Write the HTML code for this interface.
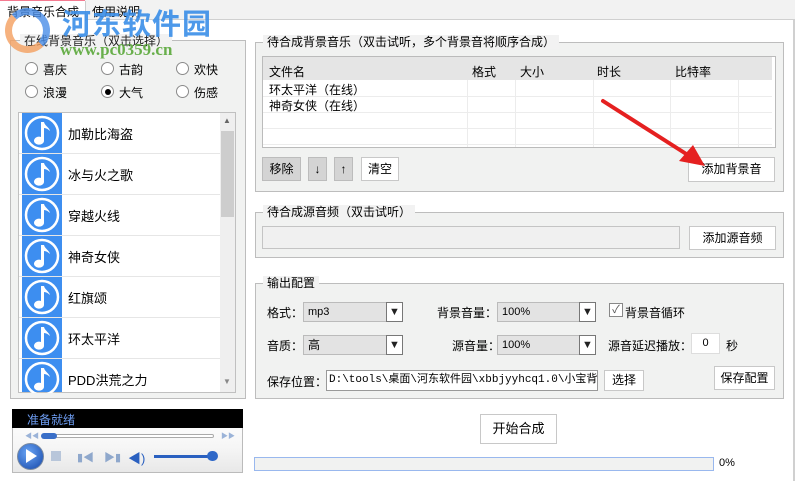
<!DOCTYPE html>
<html><head><meta charset="utf-8"><style>
*{margin:0;padding:0;box-sizing:border-box}
body{width:795px;height:481px;background:#fff;position:relative;overflow:hidden;font-family:"Liberation Sans","Noto Sans CJK SC",sans-serif;font-size:12px;color:#000}
.a{position:absolute}
.grp{position:absolute;border:1px solid #bdbdbd;background:#f1f2f1}
.lg{position:absolute;background:#f2f2f2;padding:0 4px;font-size:12px;line-height:14px}
.btn{position:absolute;background:#fff;border:1px solid #c8c8c8;text-align:center;font-size:12px}
.gbtn{position:absolute;background:#d4d4d4;border:1px solid #bcbcbc;text-align:center;font-size:12px}
.rad{position:absolute;width:13px;height:13px;border-radius:50%;border:1px solid #8a8a8a;background:#fff}
.item{position:absolute;left:19px;width:201px;height:41px;border-bottom:1px solid #e6e6e6;background:#fff}
.ic{position:absolute;left:3px;top:0;width:40px;height:40px;background:#3d8ef0}
.item span{position:absolute;left:49px;top:11px;font-size:13px}
.combo{position:absolute;height:20px;background:#e3e3e3;border:1px solid #bbb;font-size:11px;line-height:18px;padding-left:4px}
.combo b{position:absolute;right:-1px;top:-1px;width:17px;height:20px;background:#fff;border:1px solid #777;font-size:11px;line-height:18px;text-align:center;color:#222;font-weight:normal}
.lab{position:absolute;font-size:12px}
</style></head><body>
<div class="a" style="left:0;top:0;width:795px;height:20px;background:#f2f2f2;border-bottom:1px solid #d0d0d0"></div>
<div class="a" style="left:0;top:0;width:85px;height:2px;background:#f47a90"></div>
<div class="a" style="left:0;top:1px;width:86px;height:20px;background:#fff;border-right:1px solid #ccc"></div>
<div class="lab" style="left:7px;top:3px">背景音乐合成</div>
<div class="lab" style="left:92px;top:3px">使用说明</div>
<div class="a" style="left:793px;top:20px;width:2px;height:461px;background:#d0d0d0"></div>

<div class="grp" style="left:10px;top:40px;width:236px;height:359px"></div>
<div class="lg" style="left:20px;top:34px;color:#222">在线背景音乐（双击选择）</div>
<div class="rad" style="left:25px;top:62px"></div><div class="lab" style="left:43px;top:61px">喜庆</div>
<div class="rad" style="left:101px;top:62px"></div><div class="lab" style="left:119px;top:61px">古韵</div>
<div class="rad" style="left:176px;top:62px"></div><div class="lab" style="left:194px;top:61px">欢快</div>
<div class="rad" style="left:25px;top:85px"></div><div class="lab" style="left:43px;top:84px">浪漫</div>
<div class="rad" style="left:101px;top:85px"></div><div class="a" style="left:105px;top:89px;width:6px;height:6px;border-radius:50%;background:#000"></div><div class="lab" style="left:119px;top:84px">大气</div>
<div class="rad" style="left:176px;top:85px"></div><div class="lab" style="left:194px;top:84px">伤感</div>
<div class="a" style="left:18px;top:112px;width:218px;height:281px;border:1px solid #c0c0c0;background:#fff;overflow:hidden">
<div class="a" style="left:201px;top:0;width:15px;height:281px;background:#efefef"></div>
<div class="a" style="left:202px;top:18px;width:13px;height:86px;background:#cdcdcd"></div>
<div class="a" style="left:204px;top:3px;font-size:8px;color:#666">▲</div>
<div class="a" style="left:204px;top:264px;font-size:8px;color:#888">▼</div>
</div>
<div class="a" style="left:12px;top:409px;width:231px;height:64px;border:1px solid #bbb;background:linear-gradient(#fff,#f6f6f6 60%,#e8e8e8)"></div>
<div class="a" style="left:12px;top:409px;width:231px;height:19px;background:#000"></div>
<div class="lab" style="left:27px;top:411px;color:#6d9cf0">准备就绪</div>
<div class="a" style="left:42px;top:434px;width:172px;height:4px;border:1px solid #aaa;border-radius:2px;background:#fff"></div>
<div class="a" style="left:41px;top:433px;width:16px;height:6px;border-radius:3px;background:#3a6fc8"></div>
<div class="a" style="left:25px;top:431px;font-size:7px;color:#9bb3d8">◀◀</div>
<div class="a" style="left:221px;top:431px;font-size:7px;color:#9bb3d8">▶▶</div>
<div class="a" style="left:17px;top:443px;width:27px;height:27px;border-radius:50%;background:radial-gradient(circle at 40% 35%,#6aa5f5,#1446a8);border:1px solid #7a8aa0"></div>
<div class="a" style="left:26px;top:449px;width:0;height:0;border-left:11px solid #fff;border-top:7px solid transparent;border-bottom:7px solid transparent"></div>
<div class="a" style="left:51px;top:451px;width:10px;height:10px;background:#b8c6da"></div>
<div class="a" style="left:77px;top:449px;font-size:11px;color:#8fa8cc">▮◀</div>
<div class="a" style="left:104px;top:449px;font-size:11px;color:#8fa8cc">▶▮</div>
<div class="a" style="left:128px;top:448px;font-size:13px;color:#2a60c0">◀)</div>
<div class="a" style="left:154px;top:455px;width:60px;height:3px;background:#2a60c0"></div>
<div class="a" style="left:207px;top:451px;width:11px;height:10px;border-radius:5px;background:#2f68c8"></div>

<div class="a" style="left:5px;top:8px;width:45px;height:45px;border-radius:50%;border:7px solid #f4a060;border-right-color:#4a8ee8;border-top-color:#4a8ee8;opacity:.8"></div>
<div class="a" style="left:62px;top:4px;font-size:29px;font-weight:bold;color:#3a8ee8;letter-spacing:1px;font-family:'Noto Sans CJK SC',sans-serif;line-height:36px;opacity:.9">河东软件园</div>
<div class="a" style="left:60px;top:40px;font-size:17px;font-weight:bold;color:#5aa83a;font-family:'Liberation Serif',serif;opacity:.9">www.pc0359.cn</div>

<div class="grp" style="left:255px;top:42px;width:529px;height:150px"></div>
<div class="lg" style="left:263px;top:35px">待合成背景音乐（双击试听，多个背景音将顺序合成）</div>
<div class="a" style="left:262px;top:56px;width:514px;height:92px;border:1px solid #bbb;background:#fff"></div>
<div class="a" style="left:263px;top:57px;width:509px;height:23px;background:#e5e5e5"></div>
<div class="lab" style="left:269px;top:63px">文件名</div><div class="lab" style="left:472px;top:63px">格式</div><div class="lab" style="left:520px;top:63px">大小</div><div class="lab" style="left:597px;top:63px">时长</div><div class="lab" style="left:675px;top:63px">比特率</div>
<div class="a" style="left:467px;top:80px;width:1px;height:67px;background:#ececec"></div>
<div class="a" style="left:515px;top:80px;width:1px;height:67px;background:#ececec"></div>
<div class="a" style="left:593px;top:80px;width:1px;height:67px;background:#ececec"></div>
<div class="a" style="left:670px;top:80px;width:1px;height:67px;background:#ececec"></div>
<div class="a" style="left:738px;top:80px;width:1px;height:67px;background:#ececec"></div>
<div class="a" style="left:263px;top:96px;width:509px;height:1px;background:#ececec"></div>
<div class="a" style="left:263px;top:112px;width:509px;height:1px;background:#ececec"></div>
<div class="a" style="left:263px;top:128px;width:509px;height:1px;background:#ececec"></div>
<div class="a" style="left:263px;top:144px;width:509px;height:1px;background:#ececec"></div>
<div class="lab" style="left:269px;top:81px">环太平洋（在线）</div>
<div class="lab" style="left:269px;top:97px">神奇女侠（在线）</div>
<div class="gbtn" style="left:262px;top:157px;width:39px;height:24px;line-height:22px">移除</div>
<div class="gbtn" style="left:308px;top:157px;width:19px;height:24px;line-height:22px">↓</div>
<div class="gbtn" style="left:334px;top:157px;width:19px;height:24px;line-height:22px">↑</div>
<div class="btn" style="left:361px;top:157px;width:38px;height:24px;line-height:22px">清空</div>
<div class="btn" style="left:688px;top:157px;width:87px;height:25px;line-height:23px">添加背景音</div>
<svg class="a" style="left:595px;top:95px" width="115" height="75"><line x1="8" y1="6" x2="96" y2="62" stroke="#e52020" stroke-width="4" stroke-linecap="round"/><polygon points="110,71 84,66 98,50" fill="#e52020"/></svg>

<div class="grp" style="left:255px;top:212px;width:529px;height:46px"></div>
<div class="lg" style="left:263px;top:205px">待合成源音频（双击试听）</div>
<div class="a" style="left:262px;top:226px;width:418px;height:23px;border:1px solid #c4c4c4;background:#f0f0f0"></div>
<div class="btn" style="left:689px;top:226px;width:87px;height:24px;line-height:22px">添加源音频</div>

<div class="grp" style="left:255px;top:283px;width:529px;height:116px"></div>
<div class="lg" style="left:263px;top:276px">输出配置</div>
<div class="lab" style="left:267px;top:304px">格式：</div>
<div class="combo" style="left:303px;top:302px;width:100px">mp3<b>▼</b></div>
<div class="lab" style="left:437px;top:304px">背景音量：</div>
<div class="combo" style="left:497px;top:302px;width:99px">100%<b>▼</b></div>
<div class="a" style="left:609px;top:303px;width:14px;height:14px;border:1px solid #888;background:#fff;font-size:11px;line-height:12px;color:#555;text-align:center">✓</div>
<div class="lab" style="left:625px;top:304px">背景音循环</div>
<div class="lab" style="left:267px;top:337px">音质：</div>
<div class="combo" style="left:303px;top:335px;width:100px;font-size:12px">高<b>▼</b></div>
<div class="lab" style="left:452px;top:337px">源音量：</div>
<div class="combo" style="left:497px;top:335px;width:99px">100%<b>▼</b></div>
<div class="lab" style="left:608px;top:337px">源音延迟播放：</div>
<div class="a" style="left:691px;top:333px;width:29px;height:21px;background:#fff;border:1px solid #ddd;text-align:center;line-height:19px;font-size:11px">0</div>
<div class="lab" style="left:726px;top:337px">秒</div>
<div class="lab" style="left:267px;top:373px">保存位置：</div>
<div class="a" style="left:326px;top:370px;width:272px;height:21px;background:#fff;border:1px solid #999;font-family:'Liberation Mono','Noto Sans CJK SC',monospace;font-size:11px;line-height:19px;padding-left:2px;white-space:nowrap;overflow:hidden">D:\tools\桌面\河东软件园\xbbjyyhcq1.0\小宝背景</div>
<div class="btn" style="left:604px;top:370px;width:40px;height:21px;line-height:19px">选择</div>
<div class="btn" style="left:714px;top:366px;width:61px;height:24px;line-height:22px">保存配置</div>

<div class="btn" style="left:480px;top:414px;width:77px;height:30px;line-height:28px;font-size:13px">开始合成</div>
<div class="a" style="left:254px;top:457px;width:460px;height:14px;border:1px solid #99b8ee;background:#f1f2f1"></div>
<div class="lab" style="left:719px;top:457px;font-size:11px">0%</div>

<div class="item" style="top:113px"><div class="ic"></div><span>加勒比海盗</span></div>
<div class="item" style="top:154px"><div class="ic"></div><span>冰与火之歌</span></div>
<div class="item" style="top:195px"><div class="ic"></div><span>穿越火线</span></div>
<div class="item" style="top:236px"><div class="ic"></div><span>神奇女侠</span></div>
<div class="item" style="top:277px"><div class="ic"></div><span>红旗颂</span></div>
<div class="item" style="top:318px"><div class="ic"></div><span>环太平洋</span></div>
<div class="item" style="top:359px;height:33px;border:none"><div class="ic" style="height:33px"></div><span>PDD洪荒之力</span></div>
<svg class="a" style="left:22px;top:113px" width="40" height="280">
<g fill="none" stroke="#fff" stroke-width="2.5">
<circle cx="20" cy="20" r="16"/><circle cx="20" cy="61" r="16"/><circle cx="20" cy="102" r="16"/><circle cx="20" cy="143" r="16"/><circle cx="20" cy="184" r="16"/><circle cx="20" cy="225" r="16"/><circle cx="20" cy="266" r="16"/></g>
<g fill="#fff">
<path d="M19 9h3c1 4 5 5 6 9-2-2-4-3-6-3v13a5 4 0 1 1-3-4z"/>
<path transform="translate(0,41)" d="M19 9h3c1 4 5 5 6 9-2-2-4-3-6-3v13a5 4 0 1 1-3-4z"/>
<path transform="translate(0,82)" d="M19 9h3c1 4 5 5 6 9-2-2-4-3-6-3v13a5 4 0 1 1-3-4z"/>
<path transform="translate(0,123)" d="M19 9h3c1 4 5 5 6 9-2-2-4-3-6-3v13a5 4 0 1 1-3-4z"/>
<path transform="translate(0,164)" d="M19 9h3c1 4 5 5 6 9-2-2-4-3-6-3v13a5 4 0 1 1-3-4z"/>
<path transform="translate(0,205)" d="M19 9h3c1 4 5 5 6 9-2-2-4-3-6-3v13a5 4 0 1 1-3-4z"/>
<path transform="translate(0,246)" d="M19 9h3c1 4 5 5 6 9-2-2-4-3-6-3v13a5 4 0 1 1-3-4z"/>
</g></svg>
</body></html>
